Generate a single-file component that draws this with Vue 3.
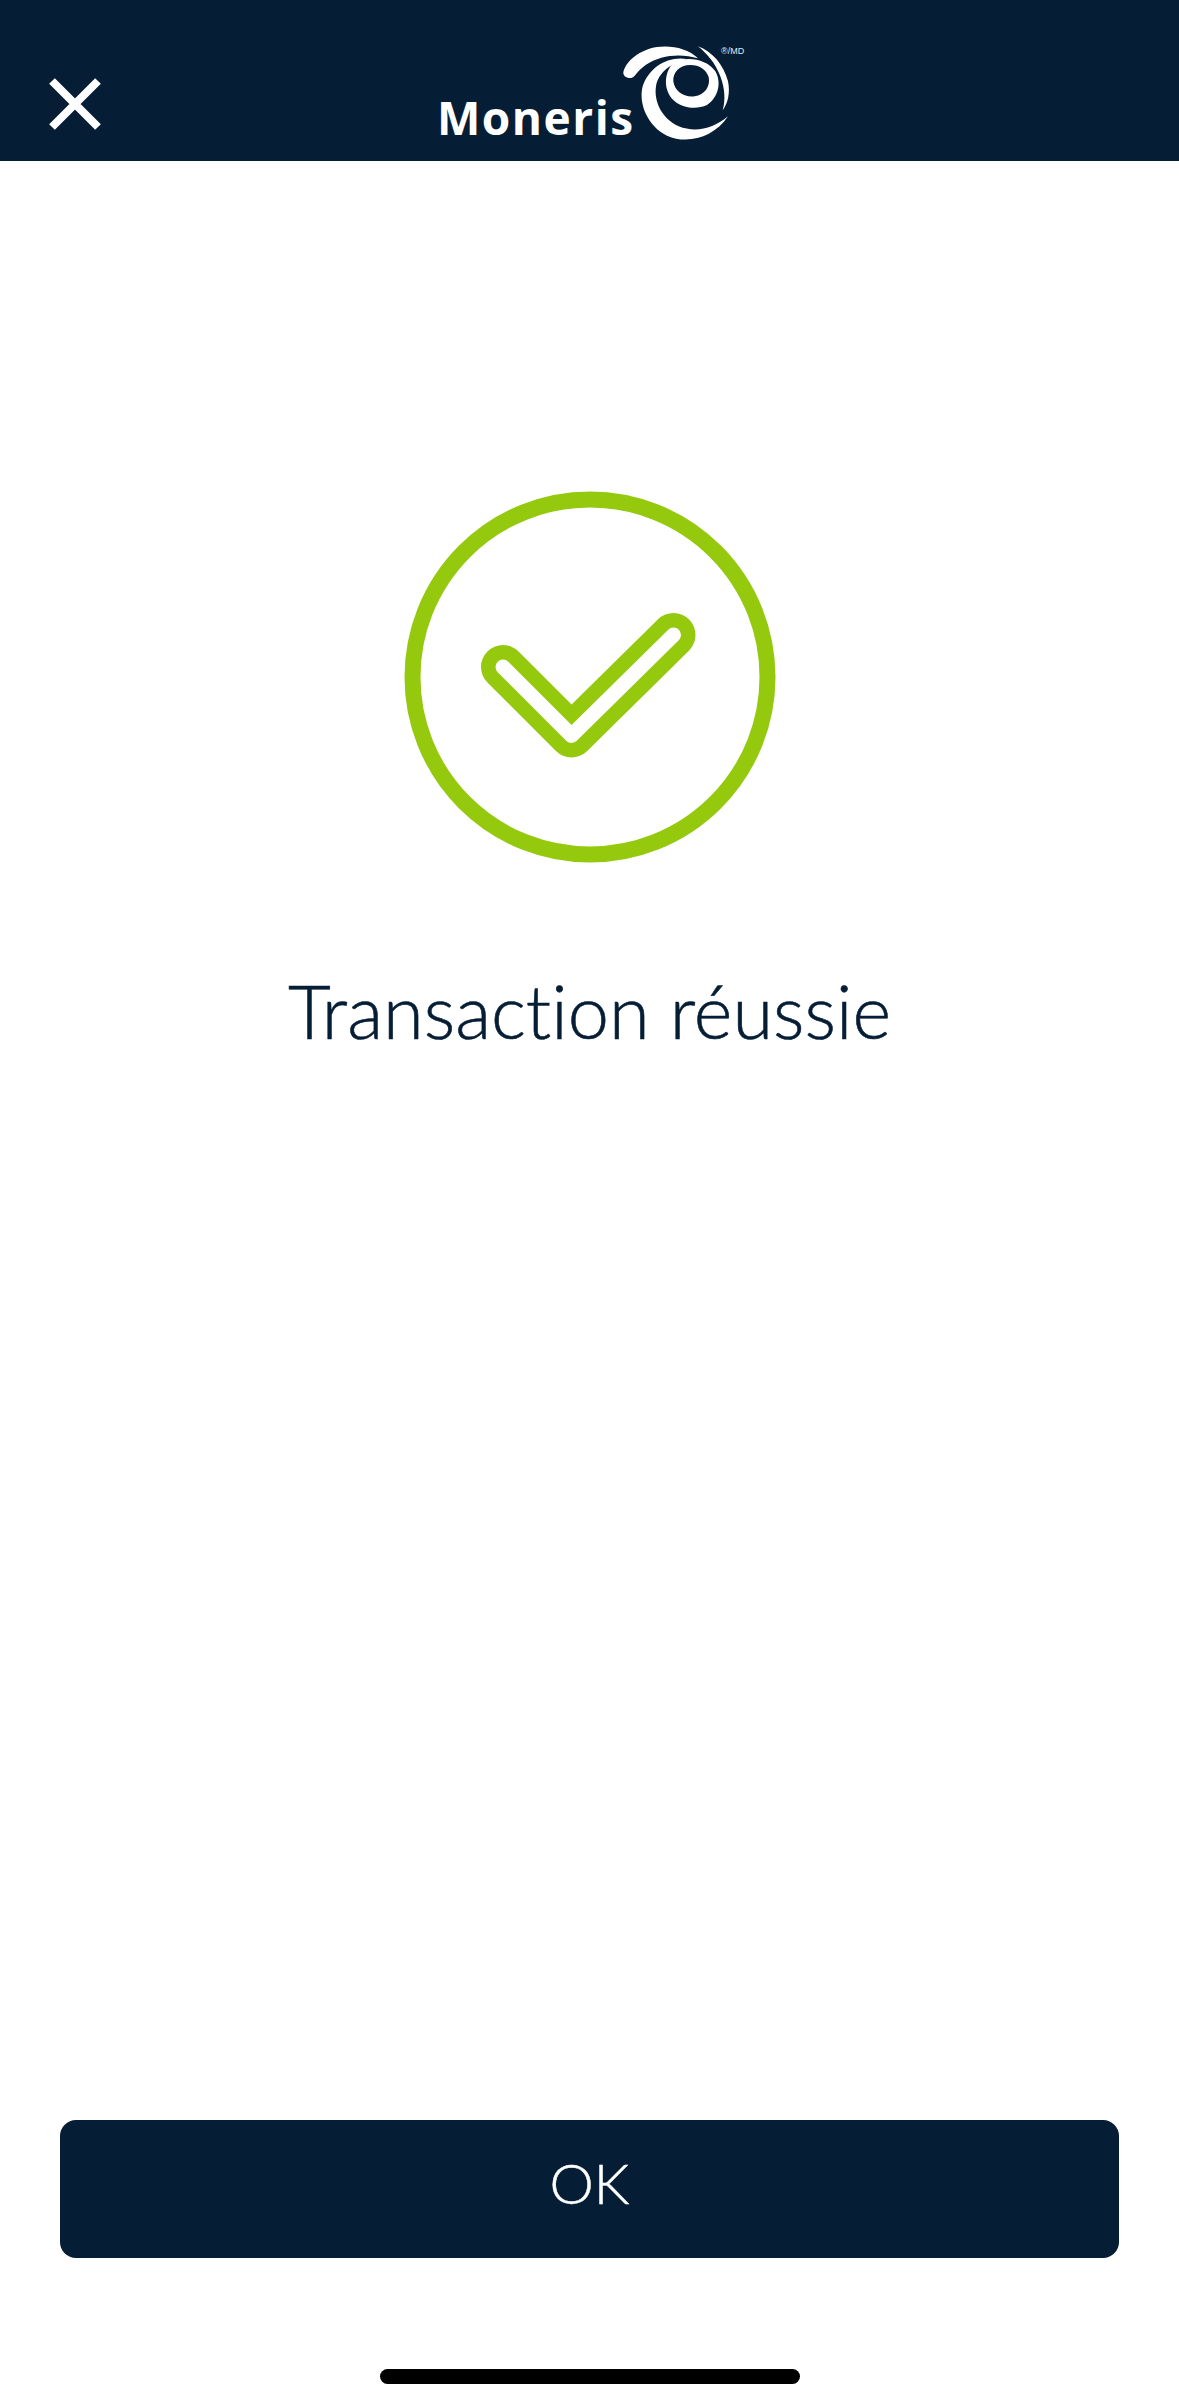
<template>
  <div class="screen">
    <header class="top-bar">
      <button class="close-button" aria-label="Fermer">
        <svg width="52" height="52" viewBox="0 0 52 52">
          <path d="M3 3 L49 49 M49 3 L3 49" stroke="#fff" stroke-width="8" fill="none" />
        </svg>
      </button>
      <div class="logo">
        <span class="logo-word">Moneris</span>
        <svg class="logo-swirl" width="140" height="115" viewBox="0 0 420 345">
          <path fill="#fff" d="M34 118 C42 82 85 50 135 42 C178 36 228 46 258 76 C225 66 185 64 148 74 C112 84 88 102 68 128 C58 142 32 134 34 118 Z" />
          <path fill="#fff" d="M258 40 C300 55 335 95 348 145 C355 180 348 210 332 232 C340 205 340 170 325 130 C310 90 285 62 258 40 Z" />
          <path fill="#fff" d="M225 78 C165 68 110 105 92 160 C78 215 110 282 165 308 C225 335 305 315 348 250 C305 287 250 300 200 280 C150 258 125 205 132 160 C138 120 175 90 225 78 Z" />
          <path fill="#fff" fill-rule="evenodd" d="M185 88 C225 68 285 78 310 115 C330 150 318 195 285 216 C250 232 205 224 180 197 C155 168 155 120 185 88 Z M235 96 C203 96 182 118 184 145 C188 175 215 194 248 190 C278 186 296 160 290 132 C283 110 262 96 235 96 Z" />
        </svg>
        <span class="logo-mark">®/MD</span>
      </div>
    </header>

    <main class="content">
      <svg class="status-icon" width="372" height="372" viewBox="0 0 372 372">
        <circle cx="186" cy="186" r="177.5" fill="none" stroke="#94c90e" stroke-width="16" />
        <polyline points="99,176 167.5,244.5 269.5,144" fill="none" stroke="#94c90e" stroke-width="44" stroke-linecap="round" stroke-linejoin="round" />
        <polyline points="99,176 167.5,244.5 269.5,144" fill="none" stroke="#fff" stroke-width="15" stroke-linecap="round" stroke-linejoin="round" />
      </svg>
      <h1 class="status-text">Transaction réussie</h1>
    </main>

    <footer class="actions">
      <button class="ok-button">OK</button>
      <div class="home-bar"></div>
    </footer>
  </div>
</template>

<script setup>
</script>

<style>
html, body {
  margin: 0;
  background: #fff;
}
</style>

<style scoped>
.screen {
  display: flex;
  flex-direction: column;
  width: 1179px;
  height: 2408px;
  background: #fff;
  font-family: "Lato", "Liberation Sans", sans-serif;
  overflow: hidden;
}

.top-bar {
  position: relative;
  display: flex;
  align-items: flex-start;
  box-sizing: border-box;
  height: 161px;
  flex-shrink: 0;
  padding: 33px 0 0 437px;
  background: #061e35;
}

.close-button {
  position: absolute;
  left: 49px;
  top: 78px;
  padding: 0;
  border: none;
  background: none;
  line-height: 0;
}

.logo {
  position: relative;
  display: flex;
  align-items: flex-start;
}

.logo-word {
  width: 175px;
  margin-top: 61px;
  color: #fff;
  font-family: "Open Sans", sans-serif;
  font-weight: 700;
  font-size: 46px;
  line-height: 46px;
  letter-spacing: 1.5px;
  white-space: nowrap;
}

.logo-mark {
  position: absolute;
  left: 284px;
  top: 13px;
  color: #e4e8ec;
  font-family: "Liberation Sans", sans-serif;
  font-size: 9px;
  line-height: 10px;
  white-space: nowrap;
}

.content {
  flex: 1;
  display: flex;
  flex-direction: column;
  align-items: center;
  padding-top: 330px;
}

.status-text {
  margin: 105px 0 0;
  color: #061e35;
  font-family: "Lato", sans-serif;
  font-weight: 300;
  font-size: 74px;
  font-variant-ligatures: none;
  -webkit-text-stroke: 0.6px #061e35;
  line-height: 86px;
}

.actions {
  display: flex;
  flex-direction: column;
  align-items: center;
  padding: 0 60px 24px;
}

.ok-button {
  width: 100%;
  height: 138px;
  padding-bottom: 15px;
  border: none;
  border-radius: 16px;
  background: #061e35;
  color: #fff;
  font-family: "Lato", sans-serif;
  font-weight: 300;
  font-size: 56px;
  -webkit-text-stroke: 0.5px #fff;
}

.home-bar {
  width: 420px;
  height: 15px;
  margin-top: 111px;
  border-radius: 8px;
  background: #000;
}
</style>
